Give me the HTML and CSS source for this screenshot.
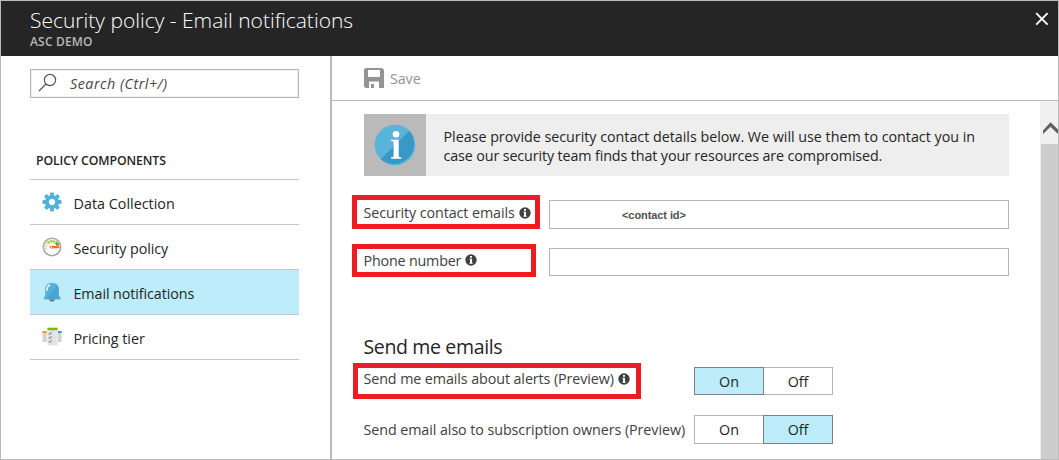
FILE: index.html
```html
<!DOCTYPE html>
<html lang="en">
<head>
<meta charset="utf-8">
<title>Security policy - Email notifications</title>
<link rel="stylesheet" href="styles.css">
</head>
<body>
<div class="blade">
  <header class="header">
    <div>
      <h1 class="title"><span>Security policy - Email notifications</span></h1>
      <div class="subtitle"><span>ASC DEMO</span></div>
    </div>
    <svg class="close" width="14" height="14" viewBox="0 0 14 14"><path d="M1.2 1.2L12.6 12.6M12.6 1.2L1.2 12.6" stroke="#fff" stroke-width="1.9" fill="none"/></svg>
  </header>
  <div class="body">
    <nav class="sidebar">
      <div class="search">
        <svg width="19" height="19" viewBox="0 0 19 19" fill="none" stroke="#555" stroke-width="1.2"><circle cx="12" cy="7" r="5.6"/><path d="M8 11L1 18"/></svg>
        <span class="search-text">Search (Ctrl+/)</span>
      </div>
      <h2 class="group"><span>POLICY COMPONENTS</span></h2>
      <ul class="menu">
        <li class="item">
          <svg width="20" height="20" viewBox="-10 -10 20 20"><g fill="#55b1dc"><circle r="7.1"/><g id="teeth"><rect x="-1.9" y="-9.5" width="3.8" height="19" rx=".8"/><rect x="-9.5" y="-1.9" width="19" height="3.8" rx=".8"/></g><use href="#teeth" transform="rotate(45)"/></g><circle r="3.1" fill="#fff"/></svg>
          <span class="t-data">Data Collection</span>
        </li>
        <li class="item">
          <svg width="20" height="20" viewBox="-10 -10 20 20" fill="none"><circle r="8.7" fill="#fff" stroke="#a5a5a5" stroke-width="1.5"/><path d="M-5.6 2.8A6 6 0 0 1-4.4-3.8" stroke="#d4e8a4" stroke-width="2.4" stroke-dasharray="2.2 .5"/><path d="M-4.2-4A5.9 5.9 0 0 1 3.7-4.5" stroke="#a9d13f" stroke-width="2.8" stroke-dasharray="2.3 .5"/><path d="M3.8-4.4A6 6 0 0 1 6-1.3" stroke="#68a800" stroke-width="2.8"/><path d="M7.5-.7L-.5-1.2Q-2.5-.9-2.5.3T-.5 1.6L7.5 1Z" fill="#f37021"/><circle cx="-.5" cy=".2" r=".8" fill="#fff"/></svg>
          <span class="t-policy">Security policy</span>
        </li>
        <li class="item selected">
          <svg width="20" height="20" viewBox="0 0 20 20"><path d="M7.4 17.2h5.2v.8q0 1.6-2.6 1.6T7.4 18Z" fill="#707070"/><path d="M10 .7C5.6.7 3.2 3.5 3.2 7.3v6.3L1.5 16.3v.9h17v-.9l-1.7-2.7V7.3C16.8 3.5 14.4.7 10 .7Z" fill="#55b1dc"/><path d="M15.4 3.2Q16.8 5 16.8 7.3V13.6L18.5 16.3V17.2H3.5Z" fill="#3f9bc9" opacity=".55"/><path d="M5 8.3Q4.800 4.500 7.700 3" fill="none" stroke="#e8f7fd" stroke-width="1.5" stroke-linecap="round"/></svg>
          <span class="t-email">Email notifications</span>
        </li>
        <li class="item">
          <svg width="20" height="20" viewBox="0 0 20 20"><path d="M.5 4h4.200v11H.5zM16 4h3.500v11H16z" fill="#d2d2d2"/><path d="M.5 4h4.200v2H.5z" fill="#ff9f00"/><path d="M16 4h3.500v2H16z" fill="#3999c6"/><path d="M5.400.5h10.200v17.800H5.400z" fill="#e3e3e3"/><path d="M5.400.8h10.200v2.400H5.400z" fill="#7fba00"/><path d="M6.800 6.300l1 1.200 1.800-2.300M6.800 10.300l1 1.200 1.800-2.300M6.800 14.300l1 1.200 1.800-2.300" fill="none" stroke="#686868" stroke-width=".9"/></svg>
          <span class="t-pricing">Pricing tier</span>
        </li>
      </ul>
    </nav>
    <main class="main">
      <div class="toolbar">
        <svg width="20" height="20" viewBox="0 0 20 20"><path fill-rule="evenodd" d="M1.5 0H18L20 2V20H15V13.500H5V20H1.500L0 18.500V1.500ZM4 2V8Q4 9 5 9H15Q16 9 16 8V2ZM7 16H10V20H7Z" fill="#949494"/></svg>
        <span class="t-save">Save</span>
      </div>
      <div class="scroll">
        <div class="content">
          <div class="banner">
            <div class="banner-icon">
              <svg width="42" height="42" viewBox="0 0 42 42"><circle cx="21" cy="21" r="20.3" fill="#59b4d9"/><path d="M35.300 6.700A20.300 20.300 0 0 1 6.700 35.300Z" fill="#3999c6"/><circle cx="22" cy="10.2" r="3.3" fill="#fff"/><path d="M17 15.800H24.700V32.800L27.400 33.500V34.800H17V33.500L19.600 32.800V17.600L17 17Z" fill="#fff"/></svg>
            </div>
            <p class="banner-text"><span class="t-b1">Please provide security contact details below. We will use them to contact you in</span><br><span class="t-b2">case our security team finds that your resources are compromised.</span></p>
          </div>
          <div class="row row-emails">
            <div class="label marked mark-emails"><span class="t-contact">Security contact emails</span><svg class="info" viewBox="0 0 12 12"><circle cx="6" cy="6" r="5.7" fill="#404040"/><path d="M5 2h2v1.700H5zM4.500 4.700H7v4h.7v1H4.400v-1H5V5.700h-.5z" fill="#fff"/></svg></div>
            <div class="field"><span>&lt;contact id&gt;</span></div>
          </div>
          <div class="row row-phone">
            <div class="label marked mark-phone"><span class="t-phone">Phone number</span><svg class="info" viewBox="0 0 12 12"><circle cx="6" cy="6" r="5.7" fill="#404040"/><path d="M5 2h2v1.700H5zM4.500 4.700H7v4h.7v1H4.400v-1H5V5.700h-.5z" fill="#fff"/></svg></div>
            <div class="field field-phone"></div>
          </div>
          <h3 class="section"><span>Send me emails</span></h3>
          <div class="row row-alerts">
            <div class="label marked mark-alerts"><span class="t-alerts">Send me emails about alerts (Preview)</span><svg class="info" viewBox="0 0 12 12"><circle cx="6" cy="6" r="5.7" fill="#404040"/><path d="M5 2h2v1.700H5zM4.500 4.700H7v4h.7v1H4.400v-1H5V5.700h-.5z" fill="#fff"/></svg></div>
            <div class="toggle"><div class="option on">On</div><div class="option">Off</div></div>
          </div>
          <div class="row row-owners">
            <div class="label"><span class="t-owners">Send email also to subscription owners (Preview)</span></div>
            <div class="toggle tall"><div class="option">On</div><div class="option on">Off</div></div>
          </div>
        </div>
        <div class="scrollbar">
          <svg width="18" height="43" viewBox="0 0 18 43"><path d="M3 29.500V33L10.500 25.800L18 33V28.500L10.500 21.300Z" fill="#606060"/></svg>
          <div class="thumb"></div>
        </div>
      </div>
    </main>
  </div>
</div>
</body>
</html>
```
FILE: styles.css
```css
* { box-sizing: border-box; }
body { margin: 0; font-family: "Open Sans", "Noto Sans", sans-serif; font-size: 14.3px; color: #252525; }
h1, h2, h3, p, ul { margin: 0; padding: 0; font-weight: 400; }
ul { list-style: none; }
span { white-space: nowrap; }
svg { display: block; flex: none; }

.blade { width: 1059px; height: 460px; border: 1px solid #bbb; background: #fff; display: flex; flex-direction: column; overflow: hidden; }
.header { height: 55px; flex: none; background: #252525; display: flex; justify-content: space-between; padding: 6px 9px 0 29px; }
.title { font-size: 21px; line-height: 27px; height: 28px; color: #fff; font-weight: 300; }
.subtitle { font-size: 12px; line-height: 14px; color: #b8b8b8; font-weight: 600; letter-spacing: .18px; }
.close { margin-top: 5px; }
.body { flex: 1; display: flex; min-height: 0; }

.sidebar { width: 329px; flex: none; padding: 13px 31px 0 29px; }
.search { height: 29px; border: 1px solid #b5b5b5; box-shadow: inset 0 0 0 1px #f1f1f1; display: flex; padding: 3px 0 0 7px; }
.search-text { margin-left: 13px; line-height: 21px; font-style: italic; color: #464646; letter-spacing: .5px; }
.group { margin-top: 52px; padding-left: 6px; height: 29px; font-size: 12.3px; line-height: 21px; font-weight: 600; letter-spacing: -.12px; }
.menu { border-top: 1px solid #c8c8c8; }
.item { height: 45px; border-bottom: 1px solid #c8c8c8; display: flex; align-items: center; padding: 0 0 0 11.5px; line-height: 20px; }
.item svg { margin-top: 0; }
.item span { margin: 3px 0 0 12px; }
.t-data { letter-spacing: .03px; }
.t-policy { letter-spacing: -.05px; }
.t-email { letter-spacing: -.08px; }
.selected { background: #bdedfb; }

.main { flex: 1; border-left: 2px solid #bbb; display: flex; flex-direction: column; min-width: 0; }
.toolbar { height: 45px; flex: none; border-bottom: 1px solid #bbb; display: flex; padding: 12px 0 0 32px; color: #949494; line-height: 21px; }
.toolbar span { margin-left: 6px; letter-spacing: -.1px; }
.scroll { flex: 1; display: flex; min-height: 0; }
.content { width: 708px; padding: 13px 0 0 20px; }
.banner { margin-left: 12px; width: 645px; height: 62px; background: #eee; display: flex; }
.banner-icon { width: 62px; background: #bababa; padding: 10px; }
.banner-text { padding: 13px 0 0 17.5px; line-height: 19px; }
.t-b1 { letter-spacing: -.015px; }
.t-b2 { letter-spacing: -.115px; }
.row { display: flex; }
.label { color: #404040; line-height: 20px; display: flex; flex: none; padding-left: 11.5px; }
.marked { border: 5px solid #ed1c24; padding-left: 6.5px; }
.info { width: 12px; height: 12px; margin: 4px 0 0 4px; }
.row-emails { margin-top: 19px; height: 34px; }
.mark-emails { width: 188px; padding-top: 3px; }
.t-contact { letter-spacing: -.08px; }
.field { width: 460px; height: 29px; margin: 5px 0 0 9px; border: 1px solid #b5b5b5; padding: 7px 0 0 72px; font: bold 11px/14px "Liberation Sans", Arial, sans-serif; color: #505050; letter-spacing: -.08px; }
.row-phone { margin-top: 15px; height: 33px; }
.mark-phone { width: 184px; padding-top: 2px; }
.mark-phone .info { margin-top: 3px; }
.t-phone { letter-spacing: -.18px; }
.field-phone { height: 28px; margin: 4px 0 0 13px; }
.section { margin: 56px 0 0 11.5px; height: 30px; font-size: 19.5px; line-height: 28px; letter-spacing: -.35px; }
.row-alerts { height: 36px; }
.mark-alerts { width: 288px; margin-left: 1px; padding: 1px 0 0 5.5px; }
.t-alerts { letter-spacing: -.09px; }
.t-owners { letter-spacing: -.07px; }
.toggle { display: flex; margin: 4px 0 0 53px; height: 28px; width: 139px; }
.option { width: 70px; border: 1px solid #b5b5b5; text-align: center; line-height: 28px; color: #252525; }
.option + .option { margin-left: -1px; }
.option.on { background: #bdedfb; border-color: #808080; position: relative; }
.row-owners { margin-top: 16px; height: 29px; }
.row-owners .label { width: 342px; padding-top: 5px; }
.tall { margin: 0; height: 29px; }
.scrollbar { width: 18px; background: #f0f0f0; display: flex; flex-direction: column; }
.thumb { flex: 1; margin-left: 1px; background: #cdcdcd; }
```
